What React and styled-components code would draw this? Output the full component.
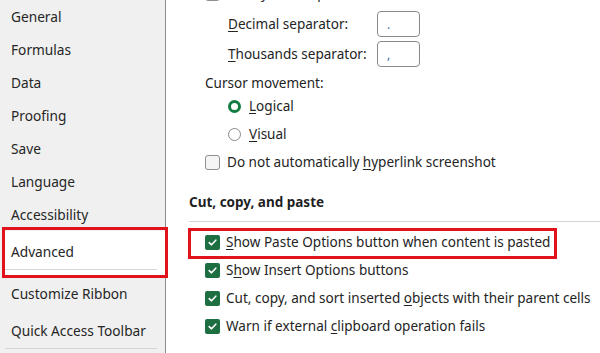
import React from "react";
import styled, { createGlobalStyle, css } from "styled-components";

const GlobalStyle = createGlobalStyle`
  html, body {
    margin: 0;
    padding: 0;
    width: 600px;
    height: 353px;
    overflow: hidden;
    background: #ffffff;
  }
  body {
    font-family: "Noto Sans", "Open Sans", sans-serif;
    font-size: 13.55px;
    color: #242424;
  }
`;

const Frame = styled.div`
  display: flex;
  width: 600px;
  height: 353px;
  overflow: hidden;
`;

const Sidebar = styled.nav`
  width: 165px;
  flex-shrink: 0;
  background: #f0f0f0;
  border-right: 1px solid #8c8c8c;
  display: flex;
  flex-direction: column;
`;

const NavItem = styled.div`
  position: relative;
  height: ${(p) => p.h ?? 33}px;
  display: flex;
  align-items: center;
  padding-left: 11px;
  padding-bottom: ${(p) => p.lift ?? 0}px;
  box-sizing: border-box;
  font-size: 13.7px;
  color: #262626;
  white-space: nowrap;

  ${(p) =>
    p.line &&
    css`
      &::before {
        content: "";
        position: absolute;
        left: ${p.selected ? 2 : 5}px;
        right: 8px;
        bottom: ${p.lineAt ?? 0}px;
        border-bottom: 1px solid #d6d6d6;
      }
    `}

  ${(p) =>
    p.selected &&
    css`
      background: #ffffff;
      margin-left: 3px;
      padding-left: 8px;
      &::after {
        content: "";
        position: absolute;
        left: -1px;
        right: -3px;
        top: -4px;
        bottom: -2px;
        border: 3px solid #e0121c;
      }
    `}
`;

const Main = styled.main`
  flex: 1;
  padding-left: 23px;
  display: flex;
  flex-direction: column;
  margin-top: -23px;
`;

const Row = styled.div`
  position: relative;
  height: ${(p) => p.h ?? 28}px;
  display: flex;
  align-items: center;
  padding-left: ${(p) => p.indent ?? 0}px;
  padding-top: ${(p) => p.pt ?? 0}px;
  box-sizing: border-box;
  white-space: nowrap;
  gap: ${(p) => p.gap ?? 8}px;

  ${(p) =>
    p.highlight &&
    css`
      &::after {
        content: "";
        position: absolute;
        left: -1px;
        top: 0;
        width: 363px;
        height: 25px;
        border: 3px solid #e0121c;
      }
    `}
`;

const Label = styled.span`
  width: ${(p) => (p.w ? `${p.w}px` : "auto")};
  flex-shrink: 0;
`;

const Key = styled.u`
  text-decoration-thickness: 1px;
  text-underline-offset: 2px;
`;

const Field = styled.div`
  width: 43px;
  height: 26px;
  box-sizing: border-box;
  border: 1px solid #8a8a8a;
  border-radius: 4px;
  padding-left: 9px;
  display: flex;
  align-items: center;
  font-size: 12px;
  color: #3a6ea5;
`;

const Heading = styled.div`
  height: 28px;
  margin-top: 12px;
  display: flex;
  align-items: center;
  font-weight: 700;
  font-size: 13.5px;
  color: #1f1f1f;
`;

const Divider = styled.div`
  margin-top: 5px;
  margin-bottom: 6px;
  border-top: 1px solid #d4d4d4;
`;

const Box = styled.span`
  width: 15px;
  height: 15px;
  box-sizing: border-box;
  border-radius: 2px;
  flex-shrink: 0;
  display: inline-flex;
  align-items: center;
  justify-content: center;
  ${(p) =>
    p.checked
      ? css`
          background: #1d6f42;
        `
      : css`
          background: #f5f5f5;
          border: 1px solid #8f8f8f;
          border-radius: 3px;
        `}
`;

const Radio = styled.span`
  width: 13px;
  height: 13px;
  box-sizing: border-box;
  border-radius: 50%;
  flex-shrink: 0;
  background: #ffffff;
  border: ${(p) => (p.checked ? "3px solid #107c41" : "1px solid #8a8a8a")};
`;

const Check = ({ checked }) => (
  <Box checked={checked}>
    {checked && (
      <svg width="11" height="11" viewBox="0 0 11 11">
        <polyline
          points="2.2,5.6 4.5,7.8 8.8,3.2"
          fill="none"
          stroke="#ffffff"
          strokeWidth="1.6"
          strokeLinecap="round"
          strokeLinejoin="round"
        />
      </svg>
    )}
  </Box>
);

const navItems = [
  "General",
  "Formulas",
  "Data",
  "Proofing",
  "Save",
  "Language",
  "Accessibility",
];

export default function App() {
  return (
    <>
      <GlobalStyle />
      <Frame>
        <Sidebar>
          {navItems.map((n) => (
            <NavItem key={n}>{n}</NavItem>
          ))}
          <NavItem h={45} lift={5} selected line lineAt={6}>
            Advanced
          </NavItem>
          <NavItem h={35}>Customize Ribbon</NavItem>
          <NavItem h={38} line lineAt={0}>
            Quick Access Toolbar
          </NavItem>
        </Sidebar>
        <Main>
          <Row h={32} indent={16} gap={7}>
            <Check />
            <span>Use system separators</span>
          </Row>
          <Row h={30} indent={39} gap={0}>
            <Label w={149}>
              <Key>D</Key>ecimal separator:
            </Label>
            <Field>.</Field>
          </Row>
          <Row h={30} indent={39} gap={0}>
            <Label w={149}>
              <Key>T</Key>housands separator:
            </Label>
            <Field>,</Field>
          </Row>
          <Row h={23} pt={5} indent={16}>
            <span>Cursor movement:</span>
          </Row>
          <Row indent={39}>
            <Radio checked />
            <span>
              <Key>L</Key>ogical
            </span>
          </Row>
          <Row indent={39}>
            <Radio />
            <span>
              <Key>V</Key>isual
            </span>
          </Row>
          <Row indent={16} gap={7}>
            <Check />
            <span>
              Do not automatically <Key>h</Key>yperlink screenshot
            </span>
          </Row>
          <Heading>Cut, copy, and paste</Heading>
          <Divider />
          <Row indent={16} gap={6} highlight>
            <Check checked />
            <span>
              <Key>S</Key>how Paste Options button when content is pasted
            </span>
          </Row>
          <Row indent={16} gap={6}>
            <Check checked />
            <span>
              S<Key>h</Key>ow Insert Options buttons
            </span>
          </Row>
          <Row indent={16} gap={6}>
            <Check checked />
            <span>
              Cut, copy, and sort inserted <Key>o</Key>bjects with their parent
              cells
            </span>
          </Row>
          <Row indent={16} gap={6}>
            <Check checked />
            <span>
              Warn if external <Key>c</Key>lipboard operation fails
            </span>
          </Row>
        </Main>
      </Frame>
    </>
  );
}
